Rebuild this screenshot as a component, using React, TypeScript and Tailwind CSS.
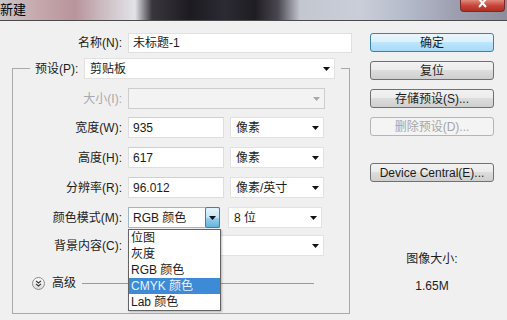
import React from 'react'

const font = "font-['Liberation_Sans','Noto_Sans_CJK_SC',sans-serif]"

function Arrow({ gray = false }: { gray?: boolean }) {
  return (
    <svg width="7" height="4" viewBox="0 0 7 4" className="shrink-0">
      <path d="M0 0h7L3.5 4z" fill={gray ? '#a8a8a8' : '#111'} />
    </svg>
  )
}

function Field({ value, w }: { value: string; w: string }) {
  return (
    <div className={`${w} h-[21px] bg-white border border-[#dedede] border-t-[#cfcfcf] flex items-center pl-[4px] text-[12px]`}>
      {value}
    </div>
  )
}

function Select({ value, w, disabled = false }: { value: string; w: string; disabled?: boolean }) {
  return (
    <div
      className={`${w} h-[21px] flex items-center justify-between pl-[5px] pr-[4px] border ${
        disabled ? 'bg-[#f3f3f3] border-[#cdcdcd]' : 'bg-white border-[#e2e2e2]'
      }`}
    >
      <span>{value}</span>
      <Arrow gray={disabled} />
    </div>
  )
}

function Row({ label, children, mt, disabled = false }: { label: string; children: React.ReactNode; mt: string; disabled?: boolean }) {
  return (
    <div className={`flex items-center ${mt}`}>
      <div className={`w-[109px] text-right ${disabled ? 'text-[#a9a9a9]' : ''}`}>{label}</div>
      <div className="ml-[6px] flex items-center gap-[6px]">{children}</div>
    </div>
  )
}

function Button({ label, primary = false, disabled = false, mt }: { label: string; primary?: boolean; disabled?: boolean; mt: string }) {
  return (
    <div
      className={`${mt} w-[124px] h-[19px] rounded-[3px] border flex items-center justify-center text-[12px] ${
        primary
          ? 'border-[#3c7fb1] bg-[linear-gradient(#eaf6fd,#d9f0fc_50%,#bee6fd_50%,#a7d9f5)]'
          : disabled
          ? 'border-[#b5b5b5] bg-[#f4f4f4] text-[#a6a6a6]'
          : 'border-[#707070] bg-[linear-gradient(#f2f2f2,#ebebeb_50%,#dddddd_50%,#cfcfcf)]'
      }`}
    >
      {label}
    </div>
  )
}

const modes = ['位图', '灰度', 'RGB 颜色', 'CMYK 颜色', 'Lab 颜色']

export default function App() {
  return (
    <div className={`w-[507px] h-[320px] overflow-hidden bg-[#f0f0f0] text-[12px] text-[#1c1c1c] ${font}`}>
      {/* title bar over a blurred desktop */}
      <div className="h-[21px] flex justify-between border-b border-[#4a4a4a] bg-[linear-gradient(90deg,#cbc6c9_0px,#c6aaae_35px,#b8949b_75px,#cdbfc4_105px,#e2e3e8_135px,#3a363e_152px,#1d1b22_190px,#2c2a32_225px,#1f1d24_255px,#4a4750_278px,#c3c7d0_300px,#c9ced8_360px,#b3b9c8_410px,#9d9fb0_455px,#8c8e9c_507px)]">
        <div className="pt-[2px] text-[13px] leading-[15px] text-black">新建</div>
        <div className="mr-[2px] w-[45px] h-[12px] rounded-b-[4px] border border-t-0 border-[#7a2b25] bg-[linear-gradient(#e08a7c,#c7463a_50%,#b02d22)] flex items-start justify-center">
          <svg width="9" height="8" viewBox="0 0 9 8">
            <path d="M1 -1L8 7M8 -1L1 7" stroke="#fff" strokeWidth="2" />
          </svg>
        </div>
      </div>

      <div className="flex">
        {/* left column */}
        <div className="w-[360px]">
          <div className="flex items-center pt-[12px]">
            <div className="w-[122px] text-right">名称(N):</div>
            <div className="ml-[6px] w-[224px] h-[20px] bg-white border border-[#e0e0e0] flex items-center pl-[4px]">未标题-1</div>
          </div>

          <div className="ml-[12px] mt-[15px] w-[338px] h-[246px] border border-[#a9a9a9] relative">
            <div className="-mt-[11px] ml-[17px] w-[311px] flex items-center bg-[#f0f0f0] pl-[5px] pr-[6px]">
              <div className="w-[49px]">预设(P):</div>
              <Select value="剪贴板" w="w-[251px]" />
            </div>

            <Row label="大小(I):" mt="mt-[9px]" disabled>
              <Select value="" w="w-[197px]" disabled />
            </Row>
            <Row label="宽度(W):" mt="mt-[8px]">
              <Field value="935" w="w-[96px]" />
              <Select value="像素" w="w-[94px]" />
            </Row>
            <Row label="高度(H):" mt="mt-[9px]">
              <Field value="617" w="w-[96px]" />
              <Select value="像素" w="w-[94px]" />
            </Row>
            <Row label="分辨率(R):" mt="mt-[9px]">
              <Field value="96.012" w="w-[96px]" />
              <Select value="像素/英寸" w="w-[94px]" />
            </Row>
            <Row label="颜色模式(M):" mt="mt-[9px]">
              <div className="relative w-[92px] h-[21px] bg-white border border-[#9fb4c8] flex items-center justify-between pl-[4px]">
                <span>RGB 颜色</span>
                <div className="w-[15px] h-[21px] -mr-px border border-[#3c7fb1] rounded-[2px] bg-[linear-gradient(#e5f4fc,#c4e5f6_50%,#98d1ef_50%,#68b3db)] flex items-center justify-center">
                  <Arrow />
                </div>
                <div className="absolute left-[-1px] top-[21px] z-10 w-[93px] bg-white border border-[#646464] shadow-[1px_1px_2px_rgba(0,0,0,0.25)]">
                  {modes.map((m) => (
                    <div
                      key={m}
                      className={`h-[16px] leading-[16px] pl-[2px] ${m === 'CMYK 颜色' ? 'bg-[#3d8bd6] text-[#e8f3ff]' : ''}`}
                    >
                      {m}
                    </div>
                  ))}
                </div>
              </div>
              <Select value="8 位" w="w-[94px] ml-[2px]" />
            </Row>
            <Row label="背景内容(C):" mt="mt-[7px]">
              <Select value="" w="w-[196px]" />
            </Row>

            <div className="mt-[19px] flex items-center h-[16px]">
              <div className="ml-[19px] w-[13px] h-[13px] rounded-full border border-[#8c8c8c] bg-[linear-gradient(#ffffff,#dcdcdc)] flex items-center justify-center">
                <svg width="7" height="7" viewBox="0 0 7 7">
                  <path d="M1 0.8L3.5 3L6 0.8M1 3.8L3.5 6L6 3.8" fill="none" stroke="#333" strokeWidth="1.1" />
                </svg>
              </div>
              <div className="ml-[7px]">高级</div>
              <div className="ml-[6px] w-[232px] h-px bg-[#9a9a9a]" />
            </div>
          </div>
        </div>

        {/* right column */}
        <div className="ml-[10px] w-[124px] flex flex-col pt-[12px]">
          <Button label="确定" primary mt="mt-0" />
          <Button label="复位" mt="mt-[9px]" />
          <Button label="存储预设(S)..." mt="mt-[9px]" />
          <Button label="删除预设(D)..." disabled mt="mt-[9px]" />
          <Button label="Device Central(E)..." mt="mt-[27px]" />
          <div className="mt-[68px] text-center">图像大小:</div>
          <div className="mt-[9px] text-center">1.65M</div>
        </div>
      </div>
    </div>
  )
}
